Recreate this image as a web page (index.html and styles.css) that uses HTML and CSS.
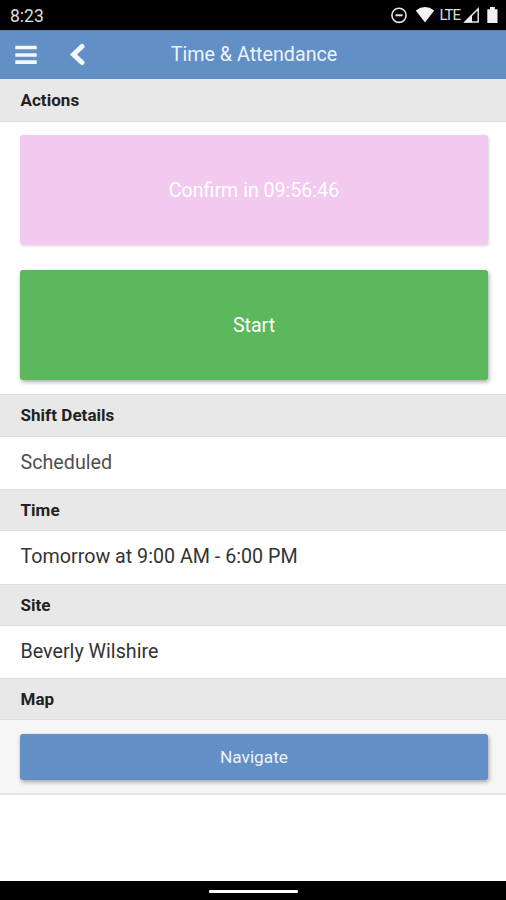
FILE: index.html
```html
<!DOCTYPE html>
<html lang="en">
<head>
<meta charset="utf-8">
<title>Time &amp; Attendance</title>
<link rel="stylesheet" href="styles.css">
</head>
<body>
<div class="status">
  <span class="clock">8:23</span>
  <svg class="status-icons" width="110" height="30" viewBox="0 0 110 30">
    <circle cx="9" cy="15.3" r="7.1" fill="none" stroke="#e6e6e6" stroke-width="1.6"/>
    <path d="M5.5 15.3h7" stroke="#e6e6e6" stroke-width="2"/>
    <path d="M25.8 10.4Q35 3.8 44.2 10.4L35 22.5Z" fill="#f4f4f4"/>
    <text class="network" x="49.5" y="20.4" textLength="21.5">LTE</text>
    <path d="M75 22L88.2 8.8V22Z" fill="none" stroke="#e6e6e6" stroke-width="1.5"/>
    <path d="M74 22.5L82 14.5V22.5Z" fill="#eee"/>
    <path d="M97.3 9.2H100V7H104.8V9.2H107.5V23H97.3Z" fill="#f0f0f0"/>
  </svg>
</div>
<header class="header">
  <svg class="menu-icon" width="24" height="20" viewBox="0 0 24 20"><path d="M1.300 2.500H22.700M1.300 10H22.700M1.300 17.200H22.700" stroke="#f4f7fb" stroke-width="3.700"/></svg>
  <svg class="back-icon" width="18" height="24" viewBox="0 0 18 24"><path d="M13 3.500L4.500 11.500L13 19.500" fill="none" stroke="#f4f7fb" stroke-width="5" stroke-linecap="round"/></svg>
  <h1 class="title">Time &amp; Attendance</h1>
</header>
<main class="content">
  <h2 class="section">Actions</h2>
  <div class="actions">
    <button class="button confirm">Confirm in 09:56:46</button>
    <button class="button start">Start</button>
  </div>
  <h2 class="section">Shift Details</h2>
  <p class="row muted">Scheduled</p>
  <h2 class="section">Time</h2>
  <p class="row">Tomorrow at 9:00 AM - 6:00 PM</p>
  <h2 class="section">Site</h2>
  <p class="row">Beverly Wilshire</p>
  <h2 class="section">Map</h2>
  <div class="map"><button class="button navigate">Navigate</button></div>
</main>
<footer class="system-bar"><div class="handle"></div></footer>
</body>
</html>
```
FILE: styles.css
```css
* { box-sizing: border-box; }
body {
  margin: 0;
  height: 900px;
  display: flex;
  flex-direction: column;
  background: #fff;
  color: #333;
  font-family: Roboto, sans-serif;
  overflow: hidden;
}
.status {
  flex: none;
  height: 30px;
  display: flex;
  align-items: center;
  justify-content: space-between;
  padding: 0 6px 0 10px;
  background: #000;
  color: #ddd;
}
.clock { font-size: 17.5px; line-height: 30px; padding-top: 2px; }
.network { font-size: 15px; fill: #ddd; }
.header {
  flex: none;
  height: 49.3px;
  display: flex;
  align-items: center;
  position: relative;
  padding: 0 14px;
  background: #628fc5;
  border-top: 1px solid #517cae;
}
.menu-icon { flex: none; }
.back-icon { flex: none; margin-left: 31px; }
.title {
  position: absolute;
  inset: 0;
  margin: 0;
  text-align: center;
  font-size: 19.7px;
  font-weight: 400;
  line-height: 48px;
  color: #edf3fa;
  padding-left: 2px;
}
.content { flex: 1; }
.section {
  height: 42.3px;
  margin: 0;
  padding-left: 20.5px;
  background: #e8e8e8;
  border-top: 1px solid #dedede;
  border-bottom: 1px solid #dedede;
  color: #222;
  font-size: 17px;
  font-weight: 700;
  letter-spacing: 0.04px;
  line-height: 40px;
}
.section:first-child { border-top-color: #e8e8e8; line-height: 41px; }
.row {
  height: 52.3px;
  margin: 0;
  padding-left: 20.5px;
  font-size: 19.7px;
  line-height: 51.4px;
}
.muted { color: #505050; }
.actions {
  height: 272.8px;
  display: flex;
  flex-direction: column;
  gap: 25px;
  padding: 13px 18px 0 20px;
}
.button {
  display: block;
  width: 100%;
  height: 110.4px;
  padding: 0;
  border: 0;
  border-radius: 3px;
  color: #fff;
  font-family: inherit;
  font-size: 19.6px;
  box-shadow: 1px 2px 4px rgba(0, 0, 0, .35);
}
.confirm { padding-top: 1px; background: #f2caf0; box-shadow: 1px 1px 3px rgba(0, 0, 0, .15); }
.start { background: #5cb85c; }
.map {
  height: 74.5px;
  padding: 13.5px 18px 0 20px;
  background: #f6f6f6;
  border-bottom: 2px solid #e4e4e4;
}
.navigate { height: 46.3px; background: #628fc5; font-size: 17.3px; color: #edf3fa; }
.system-bar {
  flex: none;
  height: 19px;
  background: #000;
  padding-top: 9px;
}
.handle { width: 89px; height: 3px; margin: 0 auto; background: #fff; border-radius: 1px; }
```
